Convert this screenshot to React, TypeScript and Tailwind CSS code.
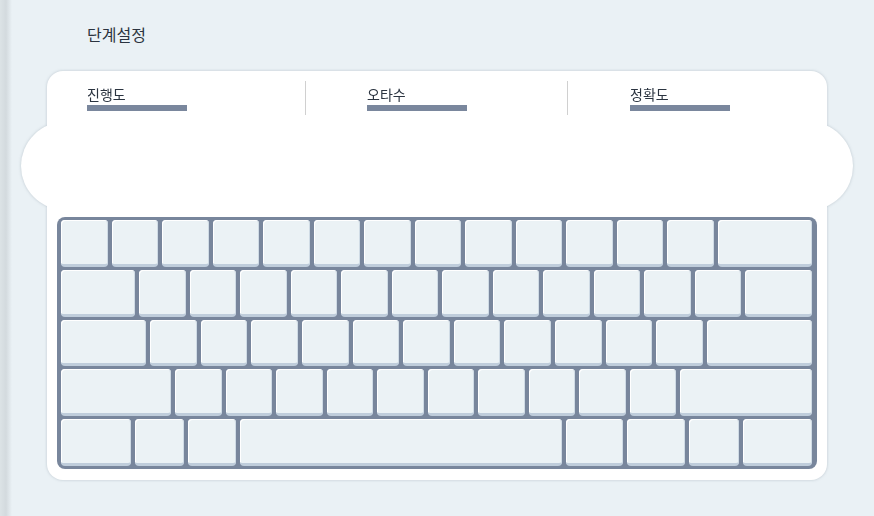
import React from 'react';

type KeyDef = { w?: number };

// each row: fixed width for special keys, otherwise flex-1
const rows: KeyDef[][] = [
    [...Array(13).fill({}), { w: 94 }],
    [{ w: 74 }, ...Array(12).fill({}), { w: 67 }],
    [{ w: 85 }, ...Array(11).fill({}), { w: 105 }],
    [{ w: 110 }, ...Array(10).fill({}), { w: 132 }],
    [{ w: 70 }, { w: 49 }, { w: 48 }, { w: 322 }, { w: 57 }, { w: 58 }, { w: 50 }, { w: 69 }],
];

const Key: React.FC<{ w?: number }> = ({ w }) => (
    <div
        className={`${w ? 'flex-none' : 'flex-1'} h-full rounded-[4px] bg-[#ebf2f5] border-b-[3px] border-[#bfcddb] shadow-[inset_1px_1px_0_#ffffff,inset_-1px_0_0_#cfdbe5]`}
        style={w ? { width: w } : undefined}
    />
);

const Stat: React.FC<{ label: string }> = ({ label }) => (
    <div>
        <p className="pt-[5px] text-[14px] leading-[17px] text-[#2b3440]">{label}</p>
        <div className="mt-[2px] w-[100px] h-[6px] bg-[#7a879d]" />
    </div>
);

export default function App() {
    return (
        <div
            className="w-[874px] h-[516px] bg-[#eaf1f5] flex overflow-hidden"
            style={{ fontFamily: '"Noto Sans CJK KR", "Noto Sans", sans-serif' }}
        >
            <div className="w-[12px] h-full flex-none bg-gradient-to-r from-[#dce3e6] via-[#d3dade] to-[#eaf1f5]" />
            <div className="flex-1">
                <h1 className="pl-[75px] pt-[24px] h-[71px] text-[16px] leading-[20px] font-normal text-[#2b3440]">단계설정</h1>
                <div className="ml-[35px] w-[780px] h-[409px] drop-shadow-[0_0_1.5px_rgba(60,80,100,0.25)]">
                    <div className="w-full h-full bg-white rounded-2xl pt-[10px] px-[10px] pb-[11px] flex flex-col">
                        <div className="h-[34px] flex -mx-[10px]">
                            <div className="w-[258px] pl-[40px]">
                                <Stat label="진행도" />
                            </div>
                            <div className="w-px h-full bg-[#d0d0d0]" />
                            <div className="w-[261px] pl-[61px]">
                                <Stat label="오타수" />
                            </div>
                            <div className="w-px h-full bg-[#d0d0d0]" />
                            <div className="flex-1 pl-[62px]">
                                <Stat label="정확도" />
                            </div>
                        </div>
                        <div className="mt-[7px] -mx-[36px] h-[88px] rounded-full bg-white" />
                        <div className="mt-[7px] flex-1 bg-[#78869c] rounded-lg pl-[4px] pr-[5px] py-[3px] flex flex-col gap-[3px]">
                            {rows.map((row, i) => (
                                <div key={i} className="flex-1 flex gap-[4px]">
                                    {row.map((k, j) => (
                                        <Key key={j} w={k.w} />
                                    ))}
                                </div>
                            ))}
                        </div>
                    </div>
                </div>
            </div>
        </div>
    );
}
